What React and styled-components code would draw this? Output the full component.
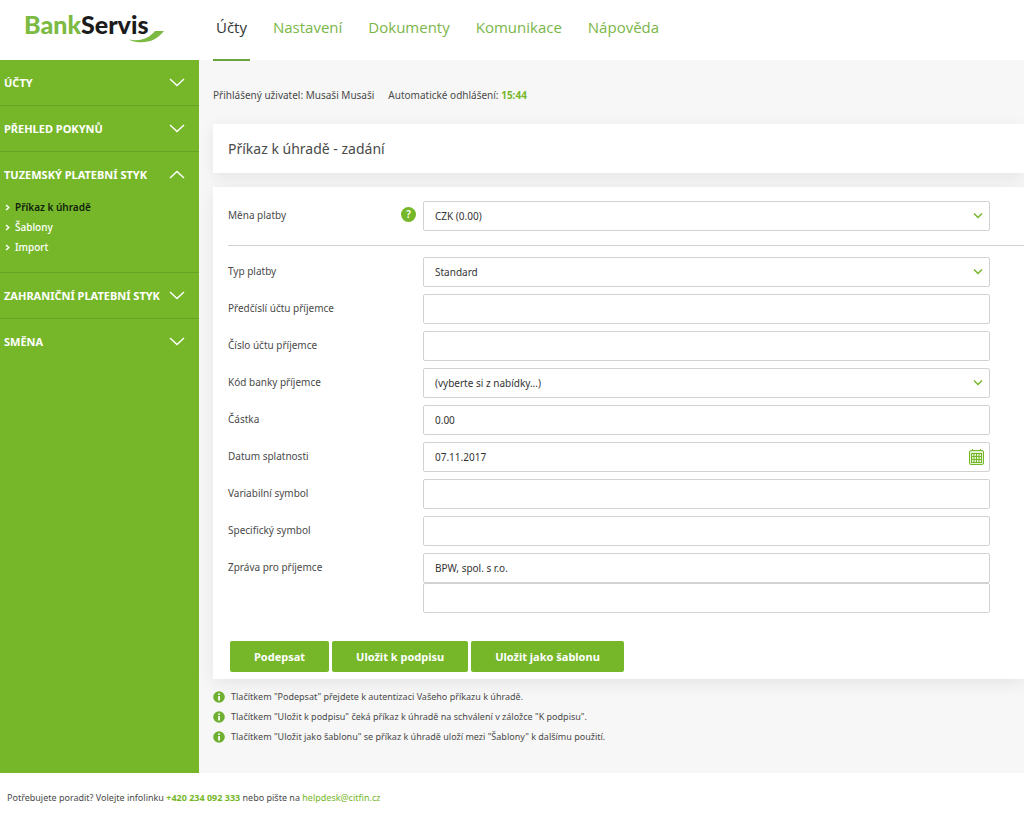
import React, { useState } from "react";
import styled, { createGlobalStyle } from "styled-components";

const GlobalStyle = createGlobalStyle`
  * {
    box-sizing: border-box;
  }
  body {
    margin: 0;
    background: #fff;
    color: #4a4a4a;
    font-family: "Noto Sans", "Open Sans", sans-serif;
    font-size: 10px;
    line-height: 20px;
  }
  a {
    color: #76b72a;
    text-decoration: none;
  }
`;

const Header = styled.header`
  position: relative;
  z-index: 1;
  display: flex;
  height: 60px;
`;

const Logo = styled.a`
  display: flex;
  align-items: flex-start;
  width: 199px;
  padding: 9px 0 0 24px;
  color: #1b1b1b;
  font-family: Lato, sans-serif;
  font-size: 25px;
  font-weight: 900;
  line-height: 30px;
`;

const LogoGreen = styled.span`
  color: #7cba42;
`;

const Swoosh = styled.svg`
  flex: none;
  margin: 21px 0 0 -19px;
`;

const TopNav = styled.nav`
  display: flex;
  gap: 20px;
  padding-left: 14px;
  font-family: "Open Sans", sans-serif;
`;

const TopLink = styled.a`
  height: 61px;
  padding: 0 3px;
  border-bottom: 2px solid ${(props) => (props.$active ? "#6aa542" : "transparent")};
  color: ${(props) => (props.$active ? "#333" : "#7ab648")};
  font-size: 15px;
  line-height: 55px;
`;

const Main = styled.div`
  display: flex;
`;

const Sidebar = styled.nav`
  flex: none;
  width: 199px;
  background: #76b72a;
`;

const Section = styled.div`
  border-bottom: ${(props) => (props.$last ? "none" : "1px solid #67a224")};
`;

const SectionButton = styled.button`
  display: flex;
  align-items: center;
  justify-content: space-between;
  width: 100%;
  height: 45px;
  padding: 0 14px 0 4px;
  border: none;
  background: none;
  color: #fff;
  font-family: inherit;
  font-size: 11px;
  font-weight: 700;
  cursor: pointer;
`;

const SubMenu = styled.ul`
  margin: 0;
  padding: 0 0 15px 5px;
  list-style: none;
`;

const SubLink = styled.a`
  display: flex;
  align-items: center;
  gap: 5px;
  color: ${(props) => (props.$active ? "#10220a" : "#fff")};
  font-size: 10px;
  font-weight: ${(props) => (props.$active ? 600 : 500)};
`;

const Content = styled.main`
  flex: 1;
  min-width: 0;
  padding: 25px 0 26px 14px;
  overflow: hidden;
  background: #f7f7f7;
`;

const UserBar = styled.div`
  display: flex;
  gap: 14px;
  margin-bottom: 19px;
`;

const Countdown = styled.b`
  color: #76b72a;
`;

const Card = styled.section`
  margin-bottom: 14px;
  padding-left: 15px;
  background: #fff;
  box-shadow: 0 4px 16px rgba(0, 0, 0, 0.08);
`;

const Title = styled.h1`
  margin: 0;
  font-size: 14px;
  font-weight: 400;
  line-height: 49px;
`;

const FormCard = styled(Card)`
  margin-bottom: 8px;
  padding-top: 14px;
  padding-bottom: 7px;
`;

const Row = styled.div`
  display: grid;
  grid-template-columns: 195px 1fr;
  margin-bottom: 7px;
  padding-right: 34px;
`;

const LabelCell = styled.div`
  display: flex;
  justify-content: space-between;
  padding: 4px 7px 0 0;
`;

const Label = styled.label`
  line-height: 20px;
`;

const Help = styled.button`
  width: 15px;
  height: 15px;
  margin-top: 2px;
  padding: 0;
  border: none;
  border-radius: 50%;
  background: #76b72a;
  color: #fff;
  font-family: inherit;
  font-size: 10px;
  font-weight: 600;
  line-height: 15px;
`;

const Control = styled.div`
  position: relative;
`;

const Input = styled.input`
  display: block;
  width: 100%;
  height: 30px;
  padding: 0 11px;
  border: 1px solid #d2d2d2;
  border-radius: 2px;
  background: #fff;
  color: #333;
  font-family: inherit;
  font-size: 10px;
`;

const Select = styled(Input)`
  appearance: none;
`;

const Chevron = styled.svg`
  position: absolute;
  top: 11px;
  right: 7px;
  pointer-events: none;
`;

const CalendarButton = styled.button`
  position: absolute;
  top: 7px;
  right: 6px;
  width: 15px;
  height: 17px;
  padding: 0;
  border: none;
  background: none;
`;

const Divider = styled.hr`
  margin: 14px 0 11px;
  border: none;
  border-top: 1px solid #d2d2d2;
`;

const Actions = styled.div`
  display: flex;
  gap: 3px;
  padding: 21px 0 0 2px;
`;

const Button = styled.button`
  height: 31px;
  padding: 0 24px;
  border: none;
  border-radius: 2px;
  background: #76b72a;
  color: #fff;
  font-family: inherit;
  font-size: 11px;
  font-weight: 700;
  cursor: pointer;
`;

const Notes = styled.ul`
  margin: 0;
  padding: 0;
  list-style: none;
`;

const Note = styled.li`
  display: flex;
  align-items: center;
  gap: 6px;
  font-size: 9px;
`;

const Footer = styled.footer`
  padding: 15px 7px;
  font-size: 9px;
`;

const topLinks = ["Účty", "Nastavení", "Dokumenty", "Komunikace", "Nápověda"];

const sections = [
  { title: "ÚČTY" },
  { title: "PŘEHLED POKYNŮ" },
  { title: "TUZEMSKÝ PLATEBNÍ STYK", items: ["Příkaz k úhradě", "Šablony", "Import"] },
  { title: "ZAHRANIČNÍ PLATEBNÍ STYK" },
  { title: "SMĚNA" },
];

const fields = [
  { id: "typ", label: "Typ platby", options: ["Standard"] },
  { id: "predcisli", label: "Předčíslí účtu příjemce" },
  { id: "cislo", label: "Číslo účtu příjemce" },
  { id: "banka", label: "Kód banky příjemce", options: ["(vyberte si z nabídky...)"] },
  { id: "castka", label: "Částka", value: "0.00" },
  { id: "datum", label: "Datum splatnosti", value: "07.11.2017", calendar: true },
  { id: "vs", label: "Variabilní symbol" },
  { id: "ss", label: "Specifický symbol" },
  { id: "zprava", label: "Zpráva pro příjemce", value: "BPW, spol. s r.o.", second: true },
];

const notes = [
  'Tlačítkem "Podepsat" přejdete k autentizaci Vašeho příkazu k úhradě.',
  'Tlačítkem "Uložit k podpisu" čeká příkaz k úhradě na schválení v záložce "K podpisu".',
  'Tlačítkem "Uložit jako šablonu" se příkaz k úhradě uloží mezi "Šablony" k dalšímu použití.',
];

function Arrow({ up }) {
  return (
    <svg width="16" height="9" viewBox="0 0 16 9" fill="none" stroke="#fff" strokeWidth="1.4">
      <path d={up ? "M1 8 8 1.5 15 8" : "M1 1 8 7.5 15 1"} />
    </svg>
  );
}

function Calendar() {
  return (
    <svg width="15" height="17" viewBox="0 0 15 17" fill="none" stroke="#76b72a">
      <rect x="0.5" y="1.5" width="14" height="14" rx="1.5" fill="#e4f3d3" />
      <path d="M3.5 0v2M11.5 0v2" />
      <path d="M2 4.5h11M2 7.5h11M2 10.5h11M2 13.5h11M2.5 4v10M5 4v10M7.5 4v10M10 4v10M12.5 4v10" />
    </svg>
  );
}

function InfoIcon() {
  return (
    <svg width="12" height="12" viewBox="0 0 12 12">
      <circle cx="6" cy="6" r="5.8" fill="#6fb032" />
      <path d="M5.2 2.5h1.7v1.5H5.2zM5.2 5h1.7v4.4H5.2z" fill="#fff" />
    </svg>
  );
}

function Field({ id, label, options, value = "", calendar, second, help }) {
  return (
    <Row>
      <LabelCell>
        <Label htmlFor={id}>{label}</Label>
        {help && <Help type="button">?</Help>}
      </LabelCell>
      <Control>
        {options ? (
          <Select as="select" id={id}>
            {options.map((option) => (
              <option key={option}>{option}</option>
            ))}
          </Select>
        ) : (
          <Input id={id} type="text" defaultValue={value} />
        )}
        {options && (
          <Chevron width="10" height="8" viewBox="0 0 10 8" fill="none" stroke="#76b72a" strokeWidth="1.5">
            <path d="M1 1.5 5 5.5 9 1.5" />
          </Chevron>
        )}
        {calendar && (
          <CalendarButton type="button" aria-label="Kalendář">
            <Calendar />
          </CalendarButton>
        )}
        {second && <Input type="text" aria-label={label} />}
      </Control>
    </Row>
  );
}

export default function App() {
  const [open, setOpen] = useState(2);

  return (
    <>
      <GlobalStyle />
      <Header>
        <Logo href="#">
          <LogoGreen>Bank</LogoGreen>Servis
          <Swoosh width="36" height="13" viewBox="0 0 36 13">
            <path d="M0 9.5C12 12 20 8 26 1h9C29 9 20 13 10 12.2 6 12 2 11 0 9.5z" fill="#7cba42" />
          </Swoosh>
        </Logo>
        <TopNav>
          {topLinks.map((link, index) => (
            <TopLink key={link} href="#" $active={index === 0}>
              {link}
            </TopLink>
          ))}
        </TopNav>
      </Header>

      <Main>
        <Sidebar>
          {sections.map((section, index) => (
            <Section key={section.title} $last={index === sections.length - 1}>
              <SectionButton type="button" onClick={() => setOpen(open === index ? -1 : index)}>
                {section.title}
                <Arrow up={open === index} />
              </SectionButton>
              {section.items && open === index && (
                <SubMenu>
                  {section.items.map((item, i) => (
                    <li key={item}>
                      <SubLink href="#" $active={i === 0}>
                        <svg width="5" height="7" viewBox="0 0 5 7" fill="none" stroke="#fff" strokeWidth="1.4">
                          <path d="M1 1 3.8 3.5 1 6" />
                        </svg>
                        {item}
                      </SubLink>
                    </li>
                  ))}
                </SubMenu>
              )}
            </Section>
          ))}
        </Sidebar>

        <Content>
          <UserBar>
            <span>Přihlášený uživatel: Musaši Musaši</span>
            <span>
              Automatické odhlášení: <Countdown>15:44</Countdown>
            </span>
          </UserBar>
          <Card>
            <Title>Příkaz k úhradě - zadání</Title>
          </Card>
          <FormCard as="form">
            <Field id="mena" label="Měna platby" options={["CZK (0.00)"]} help />
            <Divider />
            {fields.map((field) => (
              <Field key={field.id} {...field} />
            ))}
            <Actions>
              <Button type="button">Podepsat</Button>
              <Button type="button">Uložit k podpisu</Button>
              <Button type="button">Uložit jako šablonu</Button>
            </Actions>
          </FormCard>
          <Notes>
            {notes.map((note) => (
              <Note key={note}>
                <InfoIcon />
                {note}
              </Note>
            ))}
          </Notes>
        </Content>
      </Main>

      <Footer>
        Potřebujete poradit? Volejte infolinku <Countdown>+420 234 092 333</Countdown> nebo pište na{" "}
        <a href="mailto:helpdesk@citfin.cz">helpdesk@citfin.cz</a>
      </Footer>
    </>
  );
}
